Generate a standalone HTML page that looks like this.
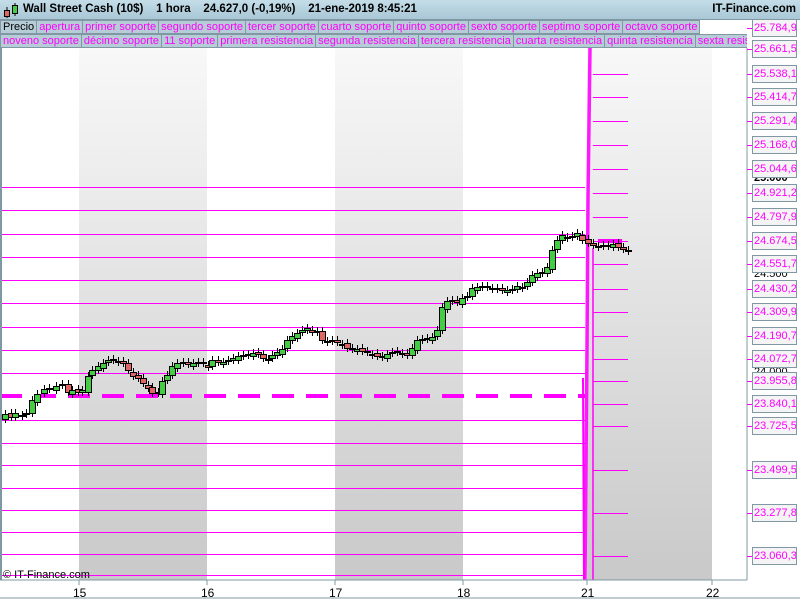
<!DOCTYPE html>
<html><head><meta charset="utf-8"><style>
*{margin:0;padding:0;box-sizing:border-box}
body{width:800px;height:600px;overflow:hidden;background:#fff;font-family:"Liberation Sans",sans-serif;position:relative}
#hdr{position:absolute;left:0;top:0;width:800px;height:20px;background:linear-gradient(#c4dde9,#a9c7d5);border-bottom:1px solid #7f98a4}
#hdr .t{position:absolute;left:23px;top:3px;font-size:11.5px;font-weight:bold;color:#000;white-space:pre}
#hdr .r{position:absolute;right:4px;top:3px;font-size:11.5px;font-weight:bold;color:#000}
.row{position:absolute;left:0;height:14px;display:flex;white-space:nowrap;overflow:hidden}
.row span{font-size:11px;line-height:13px;color:#ff00ff;background:#b6ccd6;border:1px solid #7f98a4;border-left:none;padding:0 2px;height:14px}
.row span.p{color:#000;border-left:1px solid #7f98a4}
.lab{position:absolute;left:752px;width:45px;height:18px;border:1px solid #7f98a4;background:#f4f4f4;color:#ff00ff;font-size:11px;line-height:16px;padding-left:1px;white-space:nowrap;overflow:hidden}
.blk{position:absolute;left:754px;font-size:11px;color:#000;font-weight:bold}
.tk{position:absolute;left:747px;width:5px;height:1px;background:#ff00ff}
.ax{position:absolute;top:586px;font-size:12px;color:#000}
</style></head><body>
<div id="hdr">
<svg style="position:absolute;left:3px;top:3px" width="18" height="16"><line x1="4" y1="4" x2="4" y2="15" stroke="#000"/><rect x="1.5" y="7.5" width="5" height="6" fill="#e06666" stroke="#000"/><line x1="12" y1="0" x2="12" y2="13" stroke="#000"/><rect x="9.5" y="2.5" width="5" height="8" fill="#44cc44" stroke="#000"/></svg>
<div class="t">Wall Street Cash (10$)    1 hora    24.627,0 (-0,19%)    21-ene-2019 8:45:21</div>
<div class="r">IT-Finance.com</div></div>
<div class="row" style="top:20px;width:700px"><span class="p">Precio</span><span>apertura</span><span>primer soporte</span><span>segundo soporte</span><span>tercer soporte</span><span>cuarto soporte</span><span>quinto soporte</span><span>sexto soporte</span><span>septimo soporte</span><span>octavo soporte</span></div>
<div class="row" style="top:34px;width:747px"><span class="p" style="color:#ff00ff">noveno soporte</span><span>décimo soporte</span><span>11 soporte</span><span>primera resistencia</span><span>segunda resistencia</span><span>tercera resistencia</span><span>cuarta resistencia</span><span>quinta resistencia</span><span>sexta resistencia</span></div>
<svg style="position:absolute;left:0;top:48px" width="800" height="552" id="ch">
<defs><linearGradient id="g" x1="0" y1="0" x2="0" y2="1"><stop offset="0" stop-color="#f8f8f8"/><stop offset="1" stop-color="#c9c9c9"/></linearGradient></defs>
<rect x="79" y="0" width="128" height="532" fill="url(#g)"/>
<rect x="335" y="0" width="128" height="532" fill="url(#g)"/>
<rect x="587" y="0" width="125" height="532" fill="url(#g)"/>
<g id="hl" stroke="#ff00ff" stroke-width="1"></g>
<line x1="0" y1="348" x2="585" y2="348" stroke="#ff00ff" stroke-width="4" stroke-dasharray="22,12"/>
<polyline points="590,0 588,150 587,300 585,532" fill="none" stroke="#ff00ff" stroke-width="3.5" opacity="0.9"/>
<polyline points="583,330 584,532" fill="none" stroke="#ff00ff" stroke-width="2"/>
<line x1="593" y1="200" x2="593" y2="532" stroke="#ff00ff" stroke-width="1.5"/>
<rect x="598" y="191" width="24" height="4" fill="#ff00ff"/>
<g id="cd"></g>
<line x1="1" y1="0" x2="1" y2="532" stroke="#7f98a4" stroke-width="2"/>
<line x1="0" y1="532" x2="747" y2="532" stroke="#7f98a4"/>
<line x1="747" y1="0" x2="747" y2="532" stroke="#7f98a4"/>
<line x1="0" y1="550" x2="800" y2="550" stroke="#7f98a4"/>
<g stroke="#7f98a4"><line x1="79" y1="532" x2="79" y2="537"/><line x1="207" y1="532" x2="207" y2="537"/><line x1="335" y1="532" x2="335" y2="537"/><line x1="463" y1="532" x2="463" y2="537"/><line x1="587" y1="532" x2="587" y2="537"/><line x1="712" y1="532" x2="712" y2="537"/></g>
<text x="3" y="530" font-size="11" font-family="Liberation Sans" fill="#000">© IT-Finance.com</text>
</svg>
<div class="ax" style="left:73px">15</div><div class="ax" style="left:201px">16</div><div class="ax" style="left:329px">17</div><div class="ax" style="left:457px">18</div><div class="ax" style="left:581px">21</div><div class="ax" style="left:706px">22</div>
<div class="blk" style="top:172px">25.000</div><div class="blk" style="top:268px;font-weight:normal">24.500</div><div class="blk" style="top:366px;font-weight:normal">24.000</div>
<div class="blk" style="top:68px;font-weight:normal">25.500</div>
<div id="labs"></div>
<script>
var NS="http://www.w3.org/2000/svg";
var hl=document.getElementById('hl');
[187,210,234,257,280,303,327,350,373,420,443,465,488,510,532,554,575].forEach(function(y){var l=document.createElementNS(NS,'line');l.setAttribute('x1',0);l.setAttribute('x2',585);l.setAttribute('y1',y-48+.5);l.setAttribute('y2',y-48+.5);hl.appendChild(l);});
[74,97,121,145,169,193,217,241,264,289,312,336,359,381,404,426,470,513,556].forEach(function(y){var l=document.createElementNS(NS,'line');l.setAttribute('x1',593);l.setAttribute('x2',628);l.setAttribute('y1',y-48+.5);l.setAttribute('y2',y-48+.5);hl.appendChild(l);});
var L=[["25.784,9",28],["25.661,5",49],["25.538,1",74],["25.414,7",97],["25.291,4",121],["25.168,0",145],["25.044,6",169],["24.921,2",193],["24.797,9",217],["24.674,5",241],["24.551,7",264],["24.430,2",289],["24.309,9",312],["24.190,7",336],["24.072,7",359],["23.955,8",381],["23.840,1",404],["23.725,5",426],["23.499,5",470],["23.277,8",513],["23.060,3",556]];
var h='';L.forEach(function(a){h+='<div class="tk" style="top:'+a[1]+'px"></div><div class="lab" style="top:'+(a[1]-9)+'px">'+a[0]+'</div>';});
document.getElementById('labs').innerHTML=h;
var P=[[5,414],[11,417],[15,413],[22,415],[26,413],[32,400],[37,394],[44,389],[49,388],[56,386],[62,384],[68,392],[72,390],[78,392],[82,390],[88,376],[92,370],[98,366],[103,363],[108,360],[113,359],[118,362],[123,363],[128,370],[133,376],[138,378],[143,383],[148,388],[152,393],[158,392],[162,381],[167,375],[172,366],[177,363],[183,362],[188,364],[193,363],[198,362],[203,363],[208,367],[212,360],[218,362],[223,362],[228,360],[233,358],[238,356],[243,355],[248,354],[253,353],[258,354],[263,358],[268,359],[272,355],[277,352],[282,349],[287,340],[292,336],[297,333],[302,330],[307,328],[312,332],[317,331],[322,340],[327,341],[332,340],[337,342],[342,344],[347,348],[352,349],[357,349],[362,351],[367,352],[372,354],[377,356],[382,356],[387,354],[392,352],[397,351],[402,354],[407,355],[412,348],[417,340],[422,339],[427,338],[432,337],[437,330],[442,307],[447,301],[452,300],[457,302],[462,298],[467,296],[472,288],[477,287],[482,286],[487,286],[492,289],[497,288],[502,290],[507,290],[512,289],[517,286],[522,287],[527,282],[532,275],[537,273],[542,273],[547,267],[552,250],[557,240],[562,235],[567,238],[572,236],[577,233],[582,240],[588,243],[593,245],[598,246],[603,246],[608,245],[613,244],[618,247],[623,249],[628,250]];
var s='',prev=P[0][1]-48+3;
P.forEach(function(p,i){var x=p[0],c=p[1]-48,o=prev+((i%3==0)?2:(i%3==1?-1:0));var top=Math.min(o,c),bot=Math.max(o,c);if(bot-top<1)bot=top+1;
s+='<line x1="'+(x+.5)+'" x2="'+(x+.5)+'" y1="'+(top-4)+'" y2="'+(bot+4)+'" stroke="#000"/>';
s+='<rect x="'+(x-2.5)+'" y="'+(top+.5)+'" width="6" height="'+(bot-top)+'" fill="'+(c<o?'#44cc44':'#e06666')+'" stroke="#000"/>';prev=c;});
document.getElementById('cd').innerHTML=s;
</script>
</body></html>
